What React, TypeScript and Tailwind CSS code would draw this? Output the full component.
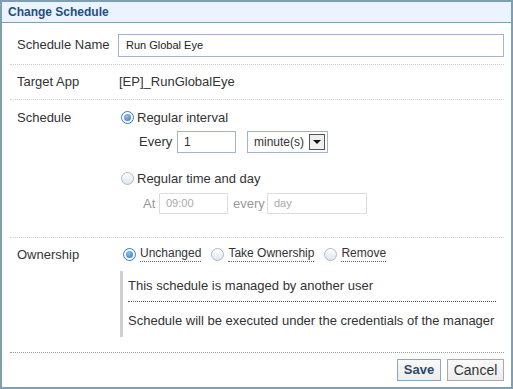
import type { ReactNode } from 'react';

function Radio({ checked }: { checked?: boolean }) {
    if (checked) {
        return (
            <span className="flex h-[13px] w-[13px] shrink-0 items-center justify-center rounded-full border border-[#3b7bbf] bg-white">
                <span className="h-[7px] w-[7px] rounded-full bg-[radial-gradient(circle_at_40%_35%,#8fc1ee,#2f74c0)]" />
            </span>
        );
    }
    return <span className="block h-[13px] w-[13px] shrink-0 rounded-full border border-[#b4b9bf] bg-[linear-gradient(to_bottom,#ffffff,#dde6ef)]" />;
}

function Row({ label, className, children }: { label: string; className: string; children?: ReactNode }) {
    return (
        <div className={`flex border-b border-dotted border-[#d0d0d0] ${className}`}>
            <div className="w-[108px] shrink-0 pl-[7px]">{label}</div>
            <div className="flex-1">{children}</div>
        </div>
    );
}

export default function App() {
    return (
        <div className="h-[389px] w-[513px] overflow-hidden bg-white text-[13px] text-[#333] [font-family:'Liberation_Sans',Arial,sans-serif]">
            <div className="flex h-full flex-col border-2 border-[#809eb1]">
                <div className="flex h-[21px] shrink-0 items-center border-b border-[#809eb1] bg-[#ebf3fe] pl-[6px] text-[12px] font-bold text-[#1f4f7d]">
                    Change Schedule
                </div>
                <div className="flex flex-1 flex-col pl-[8px] pr-[7px]">
                    <Row label="Schedule Name" className="h-[42px] items-center pt-[3px]">
                        <input
                            readOnly
                            value="Run Global Eye"
                            className="h-[23px] w-[386px] border border-[#a3b3cc] px-[7px] text-[11px] text-[#222] outline-none"
                        />
                    </Row>
                    <Row label="Target App" className="h-[35px] items-center">
                        <span className="pl-px">[EP]_RunGlobalEye</span>
                    </Row>
                    <Row label="Schedule" className="h-[138px] pt-[8px]">
                        <div className="flex flex-col">
                            <div className="flex items-center gap-[3px] pl-[3px]">
                                <Radio checked />
                                <span>Regular interval</span>
                            </div>
                            <div className="mt-[3px] flex items-center pl-[21px]">
                                <span className="w-[38px]">Every</span>
                                <input
                                    readOnly
                                    value="1"
                                    className="h-[22px] w-[59px] border border-[#a3b3cc] px-[6px] text-[12px] outline-none"
                                />
                                <div className="ml-[11px] flex h-[22px] w-[81px] items-center justify-between border border-[#a3b3cc] pl-[6px] pr-[2px]">
                                    <span className="text-[12px]">minute(s)</span>
                                    <span className="flex h-[16px] w-[16px] items-center justify-center border border-[#555] bg-[#f0f0f0]">
                                        <span className="h-0 w-0 border-x-[4px] border-t-[4px] border-x-transparent border-t-[#111]" />
                                    </span>
                                </div>
                            </div>
                            <div className="mt-[16px] flex items-center gap-[3px] pl-[3px]">
                                <Radio />
                                <span>Regular time and day</span>
                            </div>
                            <div className="mt-[5px] flex items-center pl-[25px] text-[#999]">
                                <span className="w-[16px]">At</span>
                                <div className="flex h-[21px] w-[69px] items-center border border-[#ddd] px-[6px] text-[11px] text-[#aaa]">09:00</div>
                                <span className="ml-[5px] w-[34px]">every</span>
                                <div className="flex h-[21px] w-[100px] items-center border border-[#ddd] px-[6px] text-[11px] text-[#aaa]">day</div>
                            </div>
                        </div>
                    </Row>
                    <div className="flex h-[115px] border-b border-dotted border-[#999] pt-[7px]">
                        <div className="w-[110px] shrink-0 pl-[7px]">Ownership</div>
                        <div className="flex flex-1 flex-col">
                            <div className="flex items-center pl-[3px] pt-px text-[12px]">
                                <Radio checked />
                                <span className="ml-[4px] border-b border-dotted border-[#666] leading-[15px]">Unchanged</span>
                                <span className="ml-[10px]"><Radio /></span>
                                <span className="ml-[4px] border-b border-dotted border-[#666] leading-[15px]">Take Ownership</span>
                                <span className="ml-[10px]"><Radio /></span>
                                <span className="ml-[4px] border-b border-dotted border-[#666] leading-[15px]">Remove</span>
                            </div>
                            <div className="mt-[9px] mr-[8px] flex h-[66px] flex-col border-l-[3px] border-[#cfcfcf] pl-[5px]">
                                <div className="flex h-[31px] items-center border-b border-dotted border-[#555] pb-px">
                                    This schedule is managed by another user
                                </div>
                                <div className="flex flex-1 items-center pt-[3px]">Schedule will be executed under the credentials of the manager</div>
                            </div>
                        </div>
                    </div>
                    <div className="flex justify-end gap-[6px] pt-[6px]">
                        <button className="h-[22px] w-[44px] border border-[#8aa8bf] bg-[linear-gradient(to_bottom,#fafafa,#ececec)] text-[13px] font-bold text-[#2c4a68]">
                            Save
                        </button>
                        <button className="h-[22px] w-[57px] border border-[#aaa] bg-[linear-gradient(to_bottom,#fafafa,#ececec)] text-[14px] text-[#333]">
                            Cancel
                        </button>
                    </div>
                </div>
            </div>
        </div>
    );
}
